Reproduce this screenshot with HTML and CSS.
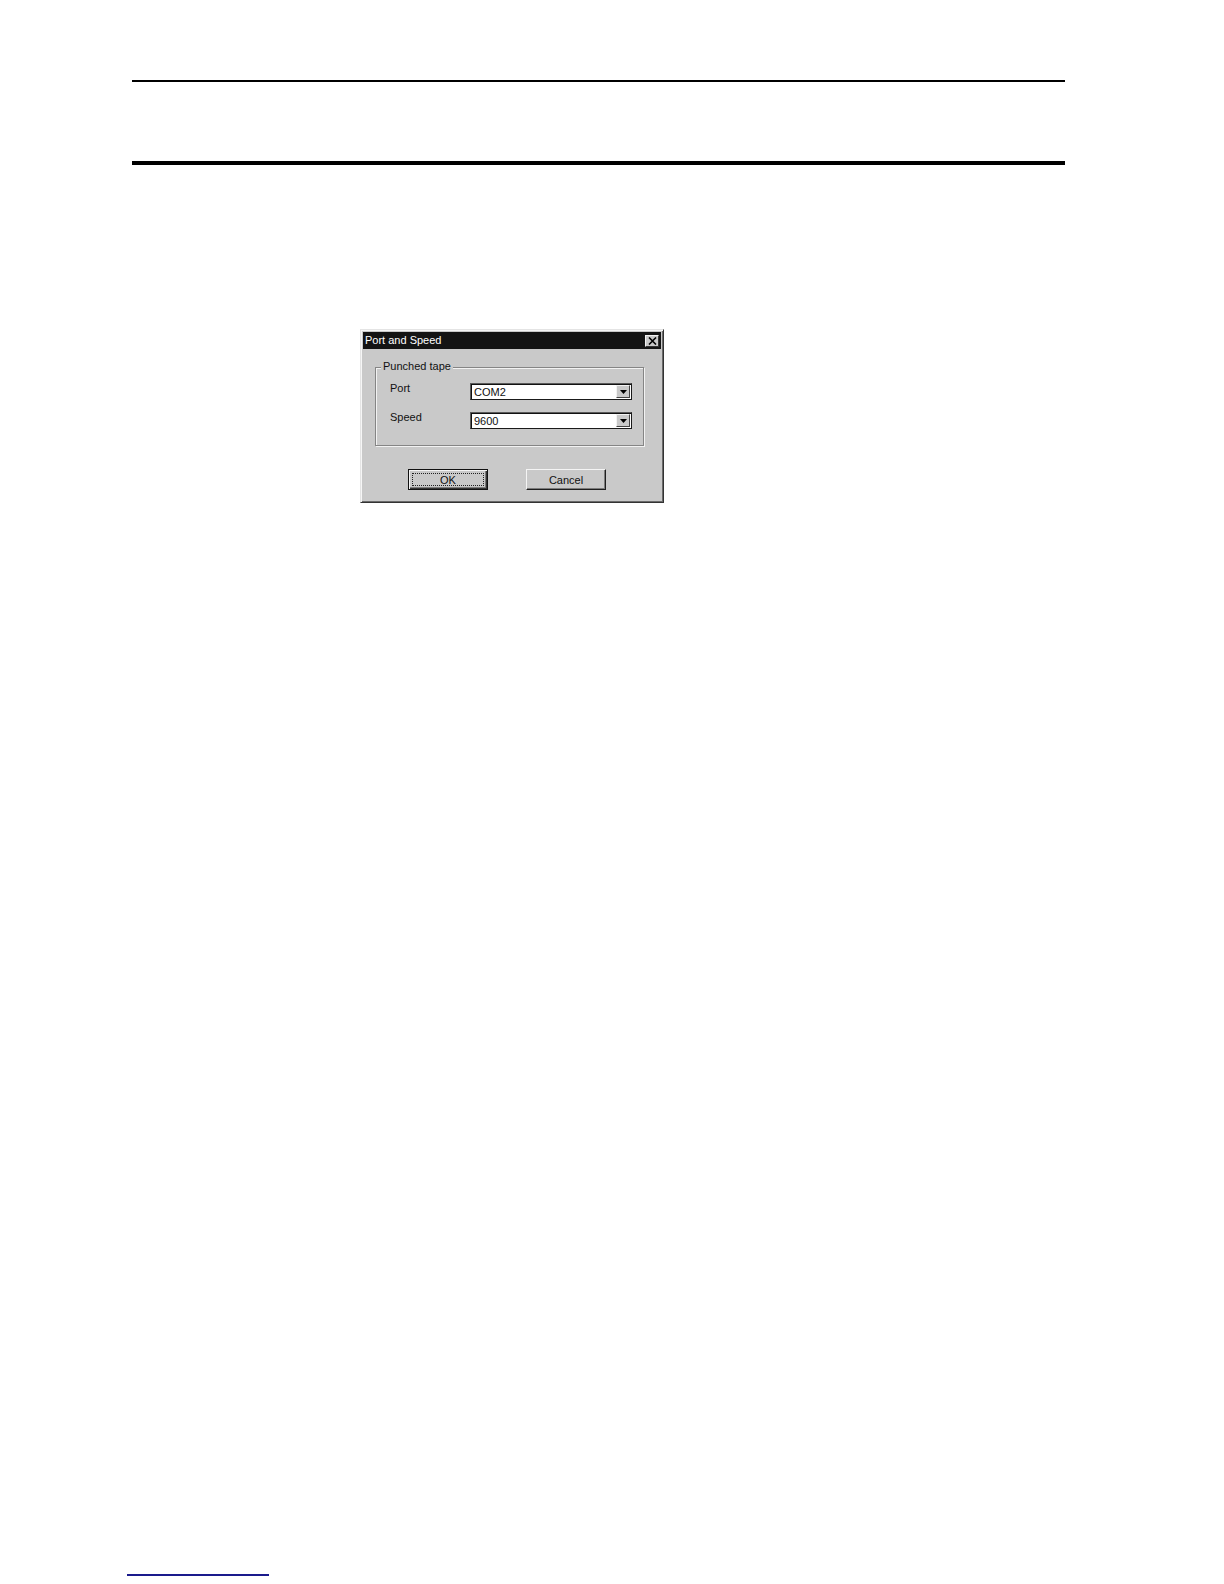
FILE: index.html
```html
<!DOCTYPE html>
<html>
<head>
<meta charset="utf-8">
<title>Port and Speed</title>
<link rel="stylesheet" href="styles.css">
</head>
<body>
<div class="page">
  <div class="rule-thin"></div>
  <div class="rule-thick"></div>

  <div class="dialog">
    <div class="titlebar">
      <span class="title">Port and Speed</span>
      <span class="close">
        <svg width="9" height="8" viewBox="0 0 9 8"><path d="M1 0.5 L8 7.5 M8 0.5 L1 7.5" stroke="#000" stroke-width="1.6" fill="none"/></svg>
      </span>
    </div>

    <div class="group">
      <span class="group-label">Punched tape</span>
      <div class="rows">
        <span class="label">Port</span>
        <div class="combo"><span class="combo-text">COM2</span><span class="drop"><svg width="7" height="4" viewBox="0 0 7 4"><path d="M0 0 H7 L3.5 4 Z" fill="#000"/></svg></span></div>
        <span class="label">Speed</span>
        <div class="combo"><span class="combo-text">9600</span><span class="drop"><svg width="7" height="4" viewBox="0 0 7 4"><path d="M0 0 H7 L3.5 4 Z" fill="#000"/></svg></span></div>
      </div>
    </div>

    <div class="buttons">
      <button class="btn btn-default"><span class="focus">OK</span></button>
      <button class="btn">Cancel</button>
    </div>
  </div>

  <div class="footer-rule"></div>
</div>
</body>
</html>
```

FILE: styles.css
```css
html, body {
  margin: 0;
  padding: 0;
  background: #ffffff;
}

.page {
  padding-top: 80px;
  font-family: "Liberation Sans", Arial, sans-serif;
}

.rule-thin {
  margin-left: 132px;
  width: 933px;
  height: 2px;
  background: #000;
}

.rule-thick {
  margin: 79px 0 0 132px;
  width: 933px;
  height: 4px;
  background: #000;
}

.dialog {
  margin: 164px 0 0 360px;
  width: 304px;
  height: 174px;
  box-sizing: border-box;
  background: #c9c9c9;
  border-top: 1px solid #e4e4e4;
  border-left: 1px solid #e4e4e4;
  border-right: 1px solid #333;
  border-bottom: 1px solid #333;
  box-shadow: inset 1px 1px 0 #f6f6f6, inset -1px -1px 0 #6a6a6a;
  padding: 2px;
  font-size: 11px;
  color: #111;
}

.titlebar {
  height: 17px;
  background: #141414;
  display: flex;
  align-items: center;
  justify-content: space-between;
  padding: 0 2px 0 2px;
}

.title {
  color: #fff;
  font-size: 11px;
  line-height: 13px;
}

.close {
  width: 14px;
  height: 12px;
  box-sizing: border-box;
  background: #c9c9c9;
  border-top: 1px solid #f2f2f2;
  border-left: 1px solid #f2f2f2;
  border-right: 1px solid #333;
  border-bottom: 1px solid #333;
  display: flex;
  align-items: center;
  justify-content: center;
}

.close svg {
  display: block;
}

.group {
  position: relative;
  margin: 18px 0 0 12px;
  width: 269px;
  height: 79px;
  box-sizing: border-box;
  border: 1px solid #858585;
  box-shadow: inset 1px 1px 0 #f2f2f2, 1px 1px 0 #f2f2f2;
}

.group-label {
  position: absolute;
  left: 5px;
  top: -8px;
  padding: 0 2px;
  background: #c9c9c9;
  line-height: 13px;
}

.rows {
  display: grid;
  grid-template-columns: 80px 162px;
  grid-auto-rows: 17px;
  row-gap: 12px;
  padding: 15px 0 0 14px;
}

.label {
  line-height: 13px;
  margin-top: -1px;
}

.combo {
  display: flex;
  align-items: stretch;
  box-sizing: border-box;
  height: 17px;
  background: #fff;
  border-top: 1px solid #5a5a5a;
  border-left: 1px solid #5a5a5a;
  border-right: 1px solid #1a1a1a;
  border-bottom: 1px solid #1a1a1a;
  box-shadow: inset 1px 1px 0 #111;
  padding: 1px 1px 1px 2px;
}

.combo-text {
  flex: 1;
  line-height: 14px;
  padding-left: 1px;
}

.drop {
  width: 14px;
  box-sizing: border-box;
  background: #c9c9c9;
  border-top: 1px solid #f2f2f2;
  border-left: 1px solid #f2f2f2;
  border-right: 1px solid #444;
  border-bottom: 1px solid #444;
  display: flex;
  align-items: center;
  justify-content: center;
}

.drop svg {
  display: block;
}

.buttons {
  display: flex;
  gap: 38px;
  margin: 23px 0 0 45px;
}

.btn {
  width: 80px;
  height: 21px;
  box-sizing: border-box;
  margin: 0;
  padding: 0;
  background: #c9c9c9;
  font-family: "Liberation Sans", Arial, sans-serif;
  font-size: 11px;
  color: #111;
  border-top: 1px solid #f4f4f4;
  border-left: 1px solid #f4f4f4;
  border-right: 1px solid #1e1e1e;
  border-bottom: 1px solid #1e1e1e;
  box-shadow: inset -1px -1px 0 #7c7c7c;
  display: flex;
  align-items: center;
  justify-content: center;
}

.btn-default {
  border: 1px solid #111;
  box-shadow: inset 1px 1px 0 #f4f4f4, inset -1px -1px 0 #333, inset -2px -2px 0 #7c7c7c;
  padding: 3px;
}

.focus {
  flex: 1;
  align-self: stretch;
  display: flex;
  align-items: center;
  justify-content: center;
  border: 1px dotted #222;
}

.footer-rule {
  margin: 1071px 0 0 127px;
  width: 142px;
  height: 2px;
  background: #1a1a8c;
}
```
